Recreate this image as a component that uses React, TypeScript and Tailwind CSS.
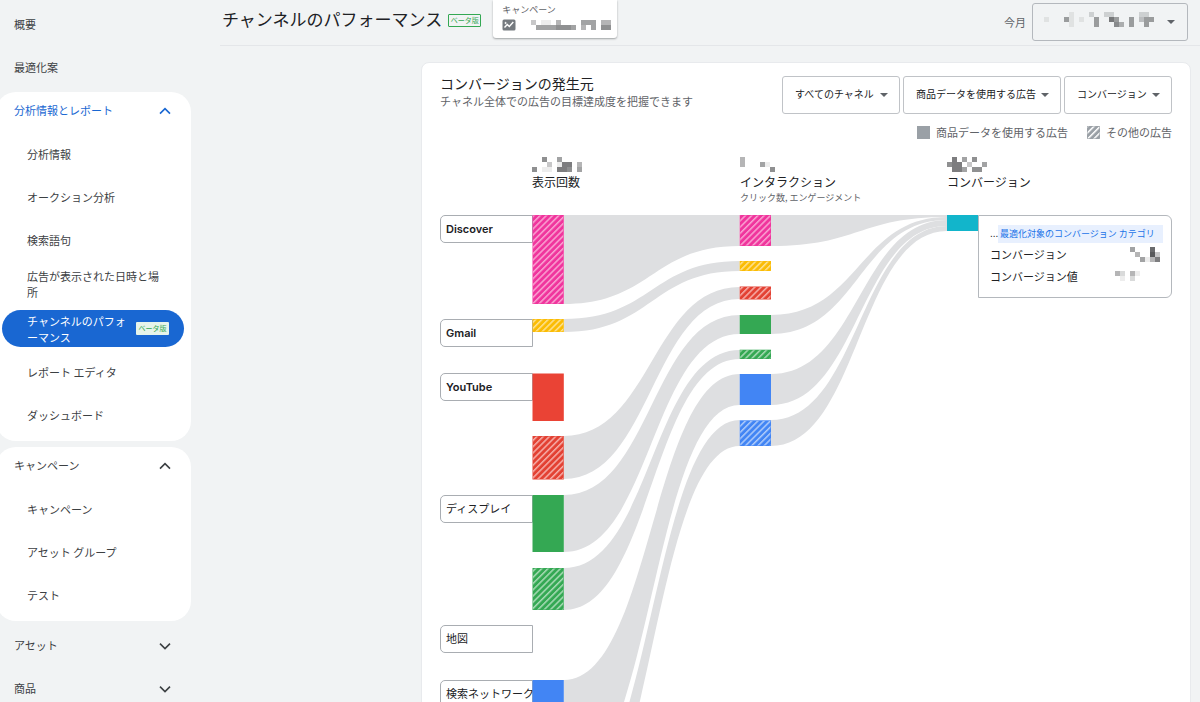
import { useId } from 'react';
import type { ReactNode } from 'react';

type Fill = { color: string; stripe?: string };

const PINK: Fill = { color: '#f0359d', stripe: '#f9a3d2' };
const YELLOW: Fill = { color: '#fbbc04', stripe: '#fde293' };
const RED: Fill = { color: '#ea4335' };
const RED_STRIPED: Fill = { color: '#e34133', stripe: '#f6aea9' };
const GREEN: Fill = { color: '#34a853' };
const GREEN_STRIPED: Fill = { color: '#34a853', stripe: '#a8dab5' };
const BLUE: Fill = { color: '#4285f4' };
const BLUE_STRIPED: Fill = { color: '#4285f4', stripe: '#aecbfa' };
const GRAY_STRIPED: Fill = { color: '#9aa0a6', stripe: '#ffffff' };

// Columns of the flow chart, left edge of each bar
const COL_IMPRESSIONS = 92.5;
const COL_INTERACTIONS = 299.7;
const COL_CONVERSIONS = 507;
const BAR_WIDTH = 31.3;

const nodes: { x: number; y: number; h: number; fill: Fill }[] = [
  { x: COL_IMPRESSIONS, y: 0, h: 89, fill: PINK },
  { x: COL_IMPRESSIONS, y: 104, h: 13, fill: YELLOW },
  { x: COL_IMPRESSIONS, y: 158.5, h: 47.5, fill: RED },
  { x: COL_IMPRESSIONS, y: 221, h: 43.5, fill: RED_STRIPED },
  { x: COL_IMPRESSIONS, y: 280, h: 57, fill: GREEN },
  { x: COL_IMPRESSIONS, y: 353, h: 42, fill: GREEN_STRIPED },
  { x: COL_IMPRESSIONS, y: 465, h: 104, fill: BLUE },
  { x: COL_IMPRESSIONS, y: 588, h: 47, fill: BLUE_STRIPED },
  { x: COL_INTERACTIONS, y: 0, h: 31, fill: PINK },
  { x: COL_INTERACTIONS, y: 46, h: 10, fill: YELLOW },
  { x: COL_INTERACTIONS, y: 71.5, h: 13, fill: RED_STRIPED },
  { x: COL_INTERACTIONS, y: 100, h: 19, fill: GREEN },
  { x: COL_INTERACTIONS, y: 134.7, h: 9.3, fill: GREEN_STRIPED },
  { x: COL_INTERACTIONS, y: 159, h: 31, fill: BLUE },
  { x: COL_INTERACTIONS, y: 205.3, h: 25.7, fill: BLUE_STRIPED },
  { x: COL_CONVERSIONS, y: 0, h: 16, fill: { color: '#12b5cb' } },
];

// [from x, top, bottom, to x, top, bottom]
const links: [number, number, number, number, number, number][] = [
  [COL_IMPRESSIONS, 0, 89, COL_INTERACTIONS, 0, 31],
  [COL_IMPRESSIONS, 104, 117, COL_INTERACTIONS, 46, 56],
  [COL_IMPRESSIONS, 221, 264, COL_INTERACTIONS, 72, 84],
  [COL_IMPRESSIONS, 280, 337, COL_INTERACTIONS, 100, 119],
  [COL_IMPRESSIONS, 353, 395, COL_INTERACTIONS, 135, 144],
  [COL_IMPRESSIONS, 465, 569, COL_INTERACTIONS, 159, 190],
  [COL_IMPRESSIONS, 588, 635, COL_INTERACTIONS, 205, 231],
  [COL_INTERACTIONS, 0, 31, COL_CONVERSIONS, 0, 2],
  [COL_INTERACTIONS, 100, 119, COL_CONVERSIONS, 2, 5],
  [COL_INTERACTIONS, 159, 190, COL_CONVERSIONS, 5, 11],
  [COL_INTERACTIONS, 205, 231, COL_CONVERSIONS, 11, 16],
];

const channels = [
  { name: 'Discover', place: 'top-0 font-semibold' },
  { name: 'Gmail', place: 'top-[104px] font-semibold' },
  { name: 'YouTube', place: 'top-[158px] font-semibold' },
  { name: 'ディスプレイ', place: 'top-[280px]' },
  { name: '地図', place: 'top-[410px]' },
  { name: '検索ネットワーク', place: 'top-[465px]' },
];

function linkPath([x0, top0, bottom0, x1, top1, bottom1]: (typeof links)[number]) {
  const start = x0 + BAR_WIDTH;
  const mid = (start + x1) / 2;
  return `M${start},${top0} C${mid},${top0} ${mid},${top1} ${x1},${top1} V${bottom1} C${mid},${bottom1} ${mid},${bottom0} ${start},${bottom0} Z`;
}

function Bar({ x, y, w, h, fill }: { x: number; y: number; w: number; h: number; fill: Fill }) {
  const id = useId();
  return (
    <g>
      <rect x={x} y={y} width={w} height={h} fill={fill.color} />
      {fill.stripe && (
        <>
          <defs>
            <pattern id={id} width="4.4" height="4.4" patternUnits="userSpaceOnUse" patternTransform="rotate(45)">
              <rect width="1.5" height="4.4" fill={fill.stripe} />
            </pattern>
          </defs>
          <rect x={x + 0.5} y={y + 0.5} width={w - 1} height={h - 1} fill={`url(#${id})`} />
        </>
      )}
    </g>
  );
}

// Masked value: each digit is the darkness of one cell
function Masked({ rows }: { rows: string[] }) {
  const cols = Math.max(...rows.map((row) => row.length));
  return (
    <svg width={cols * 5} height={rows.length * 5} viewBox={`0 0 ${cols * 5} ${rows.length * 5}`} shapeRendering="crispEdges" aria-hidden="true">
      {rows.flatMap((row, r) =>
        [...row].map((cell, c) =>
          cell === '.' ? null : (
            <rect key={`${r}-${c}`} x={c * 5} y={r * 5} width="5" height="5" fill="#202124" opacity={Number(cell) / 12} />
          ),
        ),
      )}
    </svg>
  );
}

function Chevron({ open }: { open?: boolean }) {
  return (
    <svg width="12" height="12" viewBox="0 0 12 12" fill="none" stroke="currentColor" strokeWidth="1.6" aria-hidden="true">
      <path d={open ? 'M1 8.6 6 3.6l5 5' : 'M1 3.6l5 5 5-5'} />
    </svg>
  );
}

function Caret({ className }: { className?: string }) {
  return (
    <svg width="8" height="4" viewBox="0 0 8 4" className={className} aria-hidden="true">
      <path d="M0 0h8L4 4z" fill="#5f6368" />
    </svg>
  );
}

function BetaBadge({ outlined }: { outlined?: boolean }) {
  return (
    <span
      className={`flex h-[13px] w-[33px] shrink-0 items-center justify-center rounded-[1px] text-[7px] leading-none text-[#34a853] ${
        outlined ? 'border border-[#34a853]' : 'bg-[#e6f4ea]'
      }`}
    >
      ベータ版
    </span>
  );
}

function NavItem({ children }: { children: ReactNode }) {
  return (
    <li>
      <a href="#" className="flex min-h-[37px] items-center pr-3 pl-[27px] leading-4">
        {children}
      </a>
    </li>
  );
}

function NavHeading({ label, open, active }: { label: string; open?: boolean; active?: boolean }) {
  return (
    <button
      type="button"
      aria-expanded={!!open}
      className={`flex h-[37px] w-full items-center justify-between pr-5 pl-[14px] ${active ? 'text-[#1967d2]' : ''}`}
    >
      {label}
      <Chevron open={open} />
    </button>
  );
}

function NavGroup({ children }: { children: ReactNode }) {
  return (
    <div className="-ml-1 rounded-[20px] bg-white pb-2 pl-1">
      <div className="flex flex-col gap-[6px]">{children}</div>
    </div>
  );
}

function Sidebar() {
  return (
    <nav className="flex w-[191px] shrink-0 flex-col gap-[6px] overflow-hidden pt-[6px] text-[11px] text-[#3c4043]">
      <a href="#" className="flex h-[37px] shrink-0 items-center pl-[14px]">
        概要
      </a>
      <a href="#" className="flex h-[37px] shrink-0 items-center pl-[14px]">
        最適化案
      </a>
      <NavGroup>
        <NavHeading label="分析情報とレポート" open active />
        <ul className="flex flex-col gap-[6px]">
          <NavItem>分析情報</NavItem>
          <NavItem>オークション分析</NavItem>
          <NavItem>検索語句</NavItem>
          <NavItem>
            <span className="py-1">
              広告が表示された日時と場
              <br />所
            </span>
          </NavItem>
          <li className="pr-[7px] pl-[2px]">
            <a
              href="#"
              aria-current="page"
              className="flex h-[37px] items-center justify-between rounded-full bg-[#1967d2] pr-[15px] pl-[25px] leading-4 text-white"
            >
              <span className="whitespace-nowrap">
                チャンネルのパフォ
                <br />
                ーマンス
              </span>
              <BetaBadge />
            </a>
          </li>
          <NavItem>レポート エディタ</NavItem>
          <NavItem>ダッシュボード</NavItem>
        </ul>
      </NavGroup>
      <NavGroup>
        <NavHeading label="キャンペーン" open />
        <ul className="flex flex-col gap-[6px]">
          <NavItem>キャンペーン</NavItem>
          <NavItem>アセット グループ</NavItem>
          <NavItem>テスト</NavItem>
        </ul>
      </NavGroup>
      <div className="flex flex-col gap-[6px]">
        <NavHeading label="アセット" />
        <NavHeading label="商品" />
      </div>
    </nav>
  );
}

function Header() {
  return (
    <header className="ml-[29px] flex h-[46px] shrink-0 items-start justify-between border-b border-[#e4e6e9] pr-3 pl-[2px]">
      <div className="flex items-start">
        <div className="flex h-10 items-center gap-[6px]">
          <h1 className="pb-[2px] text-[17px] leading-6 whitespace-nowrap text-[#202124]">チャンネルのパフォーマンス</h1>
          <BetaBadge outlined />
        </div>
        <div className="ml-3 h-[38px] w-[124px] rounded-b-[3px] bg-white pt-1 pr-[6px] pl-[9px] shadow-[0_1px_2px_rgba(60,64,67,0.45)]">
          <p className="text-[9px] leading-3 text-[#5f6368]">キャンペーン</p>
          <div className="mt-[3px] flex items-center justify-between">
            <svg width="14" height="12" viewBox="0 0 14 12" aria-hidden="true">
              <rect x="0.5" y="0.5" width="13" height="11" rx="1.5" fill="#757a7f" />
              <path d="M2.5 8.6 5.3 5.6l2 1.8 4-4.4" fill="none" stroke="#fff" strokeWidth="1.4" />
              <path d="m3.6 2.4.5 1 1 .5-1 .5-.5 1-.5-1-1-.5 1-.5z" fill="#fff" />
            </svg>
            <Masked rows={['3.11.4....555.44', '.55556665.4.5.66']} />
          </div>
        </div>
      </div>
      <div className="flex items-center gap-[6px] pt-[3px]">
        <span className="text-[11px] text-[#5f6368]">今月</span>
        <button
          type="button"
          aria-label="期間を選択"
          className="flex h-[38px] w-[156px] items-center justify-between rounded-[3px] border border-[#b4b8bd] pr-3 pl-[11px]"
        >
          <span className="pb-[5px]">
            <Masked rows={['.....1...2..22.....22.', '1...51.1..5..75..5.355', '.....1....5...64.5..5.']} />
          </span>
          <Caret />
        </button>
      </div>
    </header>
  );
}

function Filter({ label, value }: { label: string; value: string }) {
  return (
    <div className="relative">
      <select
        aria-label={label}
        className="h-[38px] appearance-none rounded-[3px] border border-[#c0c3c7] bg-white pr-6 pb-[3px] pl-3 text-[10px] text-[#202124]"
      >
        <option>{value}</option>
      </select>
      <Caret className="pointer-events-none absolute top-[17px] right-3" />
    </div>
  );
}

function ColumnHead({ rows, title, note }: { rows: string[]; title: string; note?: string }) {
  return (
    <div className="whitespace-nowrap">
      <div className="flex h-5 items-center">
        <Masked rows={rows} />
      </div>
      <h3 className="text-[12px] leading-4 text-[#202124]">{title}</h3>
      {note && <p className="text-[9px] leading-4 text-[#5f6368]">{note}</p>}
    </div>
  );
}

function FlowChart() {
  return (
    <div className="relative h-[660px]">
      {channels.map((channel) => (
        <div
          key={channel.name}
          className={`absolute left-0 flex h-7 w-[93px] items-center rounded-l-[5px] border border-[#a9adb2] bg-white pl-[5px] font-[Inter,'Noto_Sans_CJK_JP',sans-serif] text-[11px] whitespace-nowrap text-[#202124] ${channel.place}`}
        >
          {channel.name}
        </div>
      ))}

      <svg width="540" height="660" viewBox="0 0 540 660" className="relative" role="img" aria-label="コンバージョンの発生元">
        {links.map((link, i) => (
          <path key={i} d={linkPath(link)} fill="#dedfe1" />
        ))}
        {nodes.map((node, i) => (
          <Bar key={i} x={node.x} y={node.y} w={BAR_WIDTH} h={node.h} fill={node.fill} />
        ))}
      </svg>

      <div className="absolute top-0 left-[538px] w-[194px] rounded-r-[6px] border border-[#b4b8bd] bg-white px-2 pt-[9px] pb-[10px] text-[11px] text-[#202124]">
        <div className="flex h-[18px] items-center pl-[3px]">
          <span className="w-2 overflow-hidden font-['Liberation_Sans',sans-serif] text-[10px] leading-4">...</span>
          <a href="#" className="flex h-[18px] flex-1 items-center bg-[#e8f0fe] pl-[2px] text-[9px] whitespace-nowrap text-[#1a73e8]">
            最適化対象のコンバージョン カテゴリ
          </a>
        </div>
        <dl className="px-[3px]">
          <div className="flex h-[22px] items-center justify-between">
            <dt>コンバージョン</dt>
            <dd>
              <Masked rows={['5...8.', '.4..93', '..5147']} />
            </dd>
          </div>
          <div className="flex h-[22px] items-center justify-between">
            <dt>コンバージョン値</dt>
            <dd className="pr-5">
              <Masked rows={['42.41', '.1.2.']} />
            </dd>
          </div>
        </dl>
      </div>
    </div>
  );
}

export default function App() {
  return (
    <div className="flex h-screen overflow-hidden bg-[#f1f3f4] font-['Noto_Sans_CJK_JP',sans-serif]" lang="ja">
      <Sidebar />
      <div className="flex min-w-0 flex-1 flex-col">
        <Header />
        <main className="min-h-0 flex-1 overflow-hidden pt-4 pr-[9px] pl-[230px]">
          <section className="rounded-lg border border-[#e8eaed] bg-white px-[18px] pt-[10px]">
            <div className="flex items-start justify-between">
              <div className="whitespace-nowrap">
                <h2 className="text-[14px] leading-5 text-[#202124]">コンバージョンの発生元</h2>
                <p className="text-[11px] leading-4 text-[#5f6368]">チャネル全体での広告の目標達成度を把握できます</p>
              </div>
              <div className="flex gap-[3px] pt-[3px]">
                <Filter label="チャネル" value="すべてのチャネル" />
                <Filter label="広告" value="商品データを使用する広告" />
                <Filter label="指標" value="コンバージョン" />
              </div>
            </div>

            <div className="mt-[10px] flex h-4 items-center justify-end gap-[19px] text-[11px] text-[#5f6368]">
              <span className="flex items-center gap-[6px]">
                <span className="size-[13px] bg-[#9aa0a6]" />
                商品データを使用する広告
              </span>
              <span className="flex items-center gap-[6px]">
                <svg width="13" height="13" aria-hidden="true">
                  <Bar x={0} y={0} w={13} h={13} fill={GRAY_STRIPED} />
                </svg>
                その他の広告
              </span>
            </div>

            <div className="mt-[14px] mb-[9px] grid grid-cols-[208px_207px_1fr] pl-[92px]">
              <ColumnHead rows={['..6..5....', '...3.177.4', '6.11.776.5']} title="表示回数" />
              <ColumnHead rows={['4......', '4...51.', '......6']} title="インタラクション" note="クリック数, エンゲージメント" />
              <ColumnHead rows={['.7.5.6..', '677.3..5', '.775.66.']} title="コンバージョン" />
            </div>

            <FlowChart />
          </section>
        </main>
      </div>
    </div>
  );
}
